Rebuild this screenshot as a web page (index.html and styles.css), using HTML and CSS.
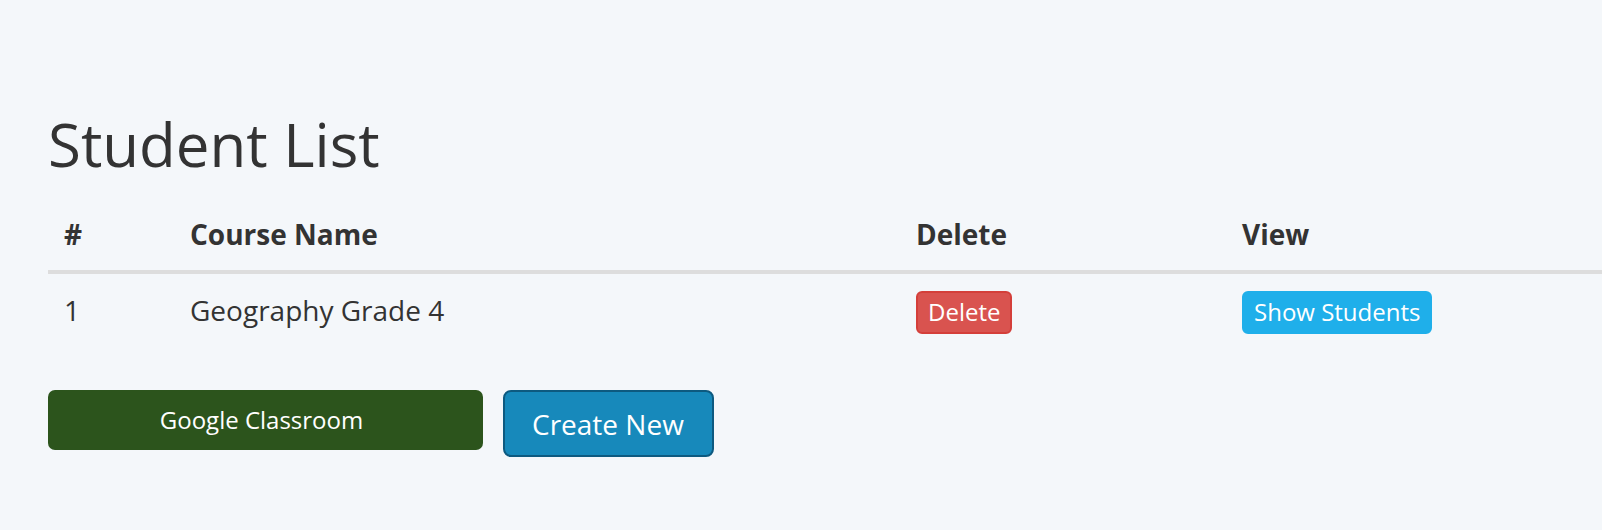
FILE: index.html
```html
<!DOCTYPE html>
<html>
<head>
<meta charset="utf-8">
<title>Student List</title>
<link rel="stylesheet" href="styles.css">
</head>
<body>
<div class="page">
  <h2 class="title">Student List</h2>
  <table class="list">
    <thead>
      <tr>
        <th class="c-num">#</th>
        <th class="c-name">Course Name</th>
        <th class="c-del">Delete</th>
        <th class="c-view">View</th>
      </tr>
    </thead>
    <tbody>
      <tr>
        <td>1</td>
        <td>Geography Grade 4</td>
        <td><button class="btn-xs btn-danger">Delete</button></td>
        <td><button class="btn-xs btn-info">Show Students</button></td>
      </tr>
    </tbody>
  </table>
  <div class="actions">
    <button class="btn-classroom">Google Classroom</button>
    <button class="btn-create">Create New</button>
  </div>
</div>
</body>
</html>
```

FILE: styles.css
```css
html, body {
  margin: 0;
  padding: 0;
  background: #f4f7fa;
  overflow: hidden;
}
body {
  font-family: "Open Sans", "DejaVu Sans", sans-serif;
  font-size: 28px;
  line-height: 40px;
  color: #333333;
}
.page {
  padding: 71px 0 0 48px;
}
.title {
  margin: 40px 0 21px 0;
  font-size: 60px;
  font-weight: 400;
  line-height: 66px;
  color: #333333;
}
.list {
  width: 1554px;
  border-collapse: collapse;
  margin-bottom: 40px;
}
.list th, .list td {
  padding: 16px;
  text-align: left;
  vertical-align: top;
}
.list td {
  padding-bottom: 16px;
}
.list th {
  font-weight: 700;
  border-bottom: 4px solid #dddddd;
}
.c-num { width: 94px; }
.c-name { width: 694px; }
.c-del { width: 294px; }
button {
  font-family: "Open Sans", "DejaVu Sans", sans-serif;
  cursor: pointer;
}
.btn-xs {
  font-size: 24px;
  line-height: 36px;
  padding: 1px 10px 2px 10px;
  margin-top: 1px;
  border: 2px solid transparent;
  border-radius: 6px;
  color: #ffffff;
  display: inline-block;
  vertical-align: top;
}
.btn-danger {
  background: #d9534f;
  border-color: #d43f3a;
}
.btn-info {
  background: #1fafea;
  border-color: #1fafea;
}
.actions {
  display: flex;
  gap: 20px;
  align-items: flex-start;
}
.btn-classroom {
  width: 435px;
  height: 60px;
  background: #2c541c;
  color: #ffffff;
  border: none;
  border-radius: 7px;
  font-size: 24px;
  line-height: 36px;
  padding: 10px 28px 10px 20px;
}
.btn-create {
  height: 67px;
  background: #1789bb;
  color: #ffffff;
  border: 2px solid #0d5a80;
  border-radius: 8px;
  font-size: 28px;
  line-height: 40px;
  padding: 11px 28px 11px 27px;
}
```
